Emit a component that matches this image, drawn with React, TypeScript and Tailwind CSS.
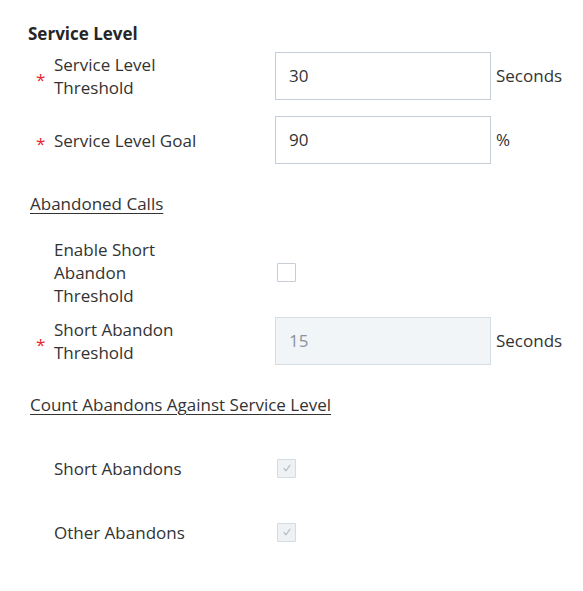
import React from 'react'

const Asterisk = () => <span className="text-[#e8232b] text-[17px] leading-none translate-y-[3px]">*</span>

const Row = ({
   label,
   required,
   children,
   className,
}: {
   label: string
   required?: boolean
   children: React.ReactNode
   className?: string
}) => (
   <div className={`flex items-center pl-[36px] ${className ?? ''}`}>
      <div className="w-[18px] flex items-center">{required && <Asterisk />}</div>
      <div className="w-[221px] pr-[74px] text-[17px] leading-[23px] text-[#333]">{label}</div>
      {children}
   </div>
)

const TextInput = ({ value, disabled }: { value: string; disabled?: boolean }) => (
   <div
      className={
         disabled
            ? 'w-[216px] h-[48px] border border-[#d5dee5] bg-[#f1f5f8] flex items-center pl-[13px] text-[17px] text-[#8b939a]'
            : 'w-[216px] h-[48px] border border-[#c5ced6] bg-white flex items-center pl-[13px] text-[17px] text-[#333]'
      }
   >
      {value}
   </div>
)

const Unit = ({ text }: { text: string }) => (
   <span className="ml-[5px] text-[17px] text-[#333]">{text}</span>
)

const Checkbox = ({ checked, disabled }: { checked?: boolean; disabled?: boolean }) => (
   <div
      className={
         disabled
            ? 'w-[19px] h-[19px] ml-[2px] border border-[#d3dce3] bg-[#eef2f5] flex items-center justify-center rounded-[1px]'
            : 'w-[19px] h-[19px] ml-[2px] border border-[#c5ced6] bg-white rounded-[1px]'
      }
   >
      {checked && (
         <svg width="10" height="10" viewBox="0 0 10 10" fill="none">
            <path d="M2 5.5 L4 7.8 L8 2.2" stroke="#b9c2c9" strokeWidth="1.3" strokeLinecap="round" strokeLinejoin="round" />
         </svg>
      )}
   </div>
)

const App = () => {
   return (
      <div className="w-[583px] h-[591px] bg-white" style={{ fontFamily: '"Open Sans", sans-serif' }}>
         <div className="pt-[22px]">
            <h2 className="pl-[28px] text-[17px] leading-[23px] font-bold text-[#262626]">Service Level</h2>

            <Row label="Service Level Threshold" required className="mt-[7px]">
               <TextInput value="30" />
               <Unit text="Seconds" />
            </Row>

            <Row label="Service Level Goal" required className="mt-[16px]">
               <TextInput value="90" />
               <Unit text="%" />
            </Row>

            <div className="mt-[28px] pl-[30px] text-[17px] leading-[23px] text-[#333] underline underline-offset-[3px]">
               Abandoned Calls
            </div>

            <Row label="Enable Short Abandon Threshold" className="mt-[23px]">
               <Checkbox />
            </Row>

            <Row label="Short Abandon Threshold" required className="mt-[10px]">
               <TextInput value="15" disabled />
               <Unit text="Seconds" />
            </Row>

            <div className="mt-[28px] pl-[30px] text-[17px] leading-[23px] text-[#333] underline underline-offset-[3px]">
               Count Abandons Against Service Level
            </div>

            <Row label="Short Abandons" className="mt-[28px] h-[48px]">
               <Checkbox checked disabled />
            </Row>

            <Row label="Other Abandons" className="mt-[16px] h-[48px]">
               <Checkbox checked disabled />
            </Row>
         </div>
      </div>
   )
}

export default App
